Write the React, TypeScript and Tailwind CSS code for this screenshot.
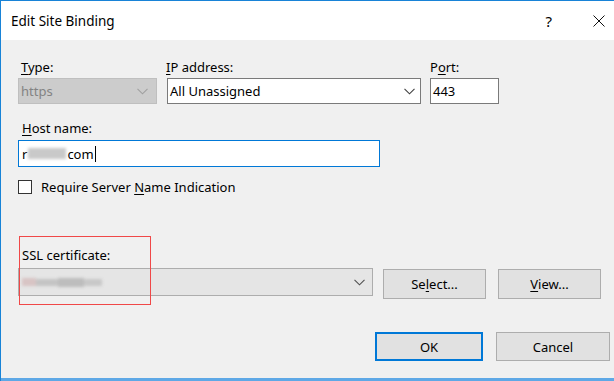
import React from "react";

const font = { fontFamily: '"Noto Sans", "Open Sans", sans-serif' };

function Chevron({ color }: { color: string }) {
  return (
    <svg width="11" height="7" viewBox="0 0 11 7" fill="none">
      <path d="M0.5 0.8 L5.5 5.8 L10.5 0.8" stroke={color} strokeWidth="1.1" />
    </svg>
  );
}

export default function App() {
  return (
    <div
      className="w-[614px] h-[381px] bg-[#f0f0f0] border-l border-t border-[#1883d7] flex flex-col text-[13px] leading-[16px] text-black overflow-hidden"
      style={font}
    >
      {/* Title bar */}
      <div className="h-[39px] bg-white flex items-center shrink-0">
        <span className="ml-[10px] text-[13.5px] mt-[1px]">Edit Site Binding</span>
        <span className="ml-auto mr-[41px] text-[15px] mt-[1px]">?</span>
        <svg className="mr-[9px]" width="12" height="12" viewBox="0 0 12 12">
          <path d="M0.5 0.5 L11.5 11.5 M11.5 0.5 L0.5 11.5" stroke="#111" strokeWidth="1" />
        </svg>
      </div>

      {/* Body */}
      <div className="relative flex-1 flex flex-col pl-[17px]">
        {/* Row 1 */}
        <div className="flex mt-[19px]">
          <div className="flex flex-col w-[139px]">
            <span className="ml-[3px] h-[16px]">
              <span className="underline underline-offset-2">T</span>ype:
            </span>
            <div className="mt-[3px] h-[26px] bg-[#cccccc] border border-[#bfbfbf] flex items-center pl-[2px] pr-[8px] text-[#838383]">
              <span>https</span>
              <span className="ml-auto flex"><Chevron color="#a0a0a0" /></span>
            </div>
          </div>
          <div className="flex flex-col w-[254px] ml-[10px]">
            <span className="-ml-[1px] h-[16px]">
              <span className="underline underline-offset-2">I</span>P address:
            </span>
            <div className="mt-[3px] h-[26px] bg-white border border-[#7a7a7a] flex items-center pl-[2px] pr-[5px]">
              <span>All Unassigned</span>
              <span className="ml-auto flex"><Chevron color="#404040" /></span>
            </div>
          </div>
          <div className="flex flex-col w-[69px] ml-[9px]">
            <span className="h-[16px]">
              P<span className="underline underline-offset-2">o</span>rt:
            </span>
            <div className="mt-[3px] h-[26px] bg-white border border-[#7a7a7a] flex items-center pl-[2px]">
              <span>443</span>
            </div>
          </div>
        </div>

        {/* Host name */}
        <span className="mt-[16px] ml-[4px] h-[16px]">
          <span className="underline underline-offset-2">H</span>ost name:
        </span>
        <div className="mt-[4px] w-[362px] h-[27px] bg-white border border-[#0078d7] flex items-center pl-[3px]">
          <span>r</span>
          <span className="w-[38px] h-[11px] bg-[#c9c9c9] blur-[1.5px] mx-[1px]" />
          <span>com</span>
          <span className="w-[1px] h-[16px] bg-black ml-[1px]" />
        </div>

        {/* Checkbox */}
        <div className="mt-[12px] flex items-center h-[15px]">
          <span className="w-[14px] h-[14px] border border-[#333] bg-white" />
          <span className="ml-[9px]">
            Require Server <span className="underline underline-offset-2">N</span>ame Indication
          </span>
        </div>

        {/* SSL */}
        <span className="mt-[53px] ml-[4px] h-[16px]">
          SSL certif<span className="underline underline-offset-2">i</span>cate:
        </span>
        <div className="flex items-start mt-[5px]">
          <div className="w-[355px] h-[28px] bg-[#e5e5e5] border border-[#adadad] flex items-center pl-[3px] pr-[7px]">
            <span className="flex items-center blur-[1.5px]">
              <span className="w-[14px] h-[8px] bg-[#d8c4c4]" />
              <span className="w-[22px] h-[7px] bg-[#c4c4c4]" />
              <span className="w-[26px] h-[9px] bg-[#bdbdbd]" />
              <span className="w-[18px] h-[7px] bg-[#c8c8c8]" />
            </span>
            <span className="ml-auto flex"><Chevron color="#505050" /></span>
          </div>
          <button className="ml-[10px] mt-[1px] w-[103px] h-[30px] bg-[#e1e1e1] border border-[#adadad] flex items-center justify-center">
            <span>Se<span className="underline underline-offset-2">l</span>ect...</span>
          </button>
          <button className="ml-[12px] mt-[1px] w-[103px] h-[30px] bg-[#e1e1e1] border border-[#adadad] flex items-center justify-center">
            <span><span className="underline underline-offset-2">V</span>iew...</span>
          </button>
        </div>

        {/* OK / Cancel */}
        <div className="flex mt-[33px]">
          <button className="ml-[357px] w-[108px] h-[29px] bg-[#e1e1e1] border-2 border-[#0078d7] flex items-center justify-center">
            OK
          </button>
          <button className="ml-[13px] w-[114px] h-[29px] bg-[#e1e1e1] border border-[#adadad] flex items-center justify-center">
            Cancel
          </button>
        </div>

        {/* Red annotation box */}
        <div className="absolute left-[18px] top-[196px] w-[132px] h-[69px] border border-[#f04848] pointer-events-none" />
      </div>

      {/* Bottom blue line */}
      <div className="h-[3px] bg-[#5ea8e6] shrink-0" />
    </div>
  );
}
